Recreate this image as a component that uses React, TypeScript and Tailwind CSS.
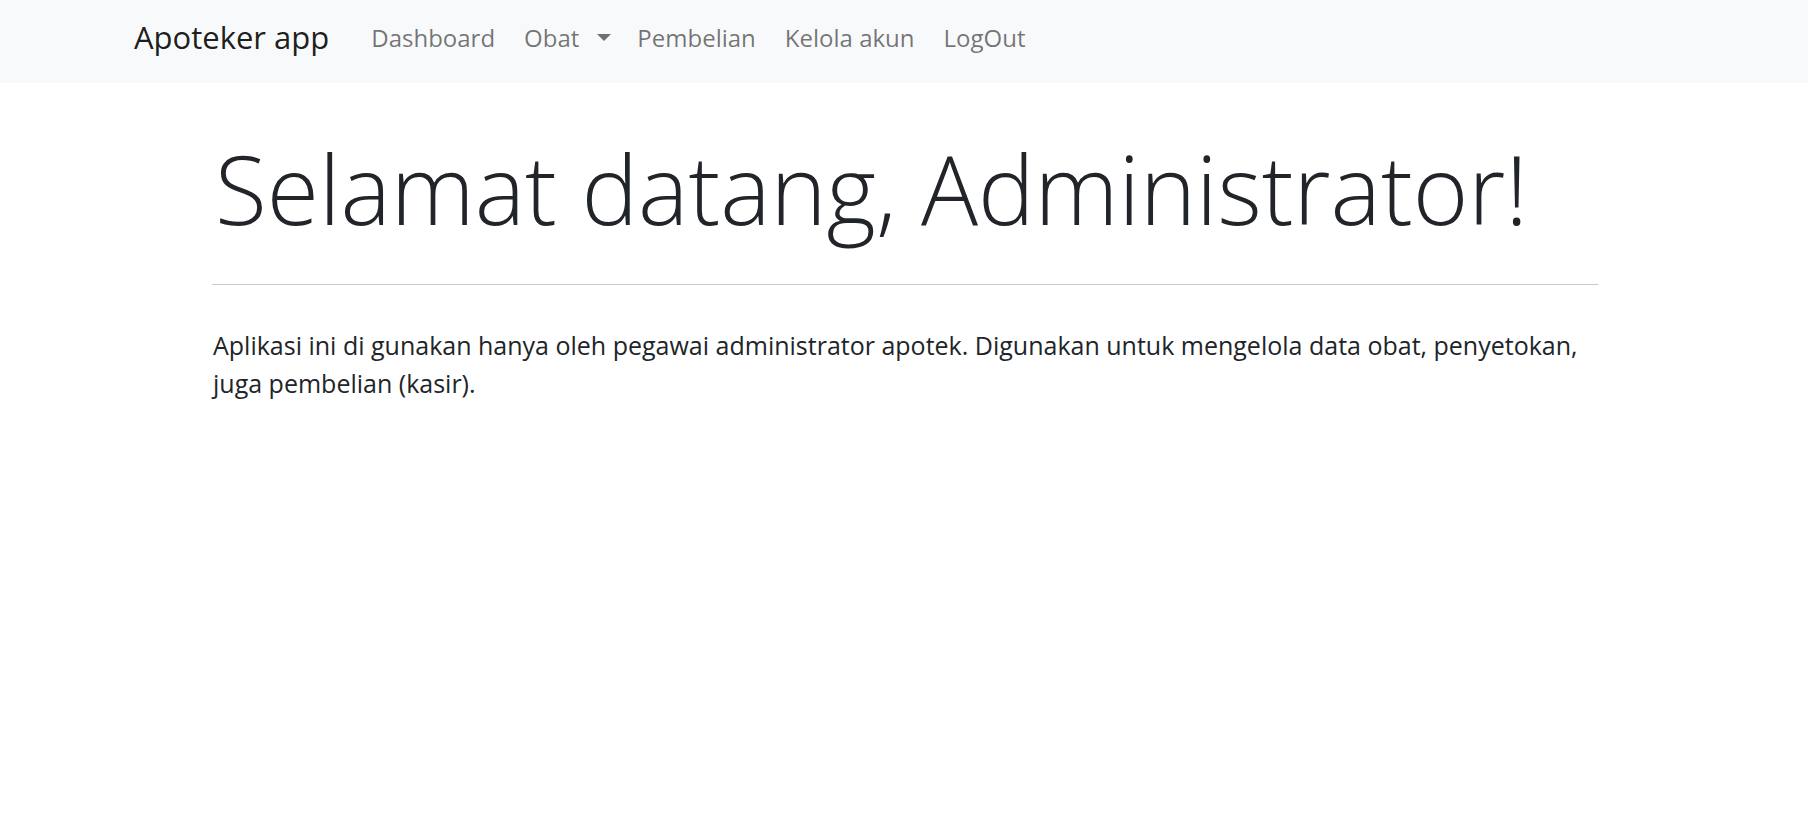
const navLinks = ['Dashboard', 'Obat', 'Pembelian', 'Kelola akun', 'LogOut'];

function Navbar() {
  return (
    <nav className="h-[83px] bg-[#f8f9fa] flex items-start pl-[134px]">
      <a href="#" className="mt-[14px] text-[31px] leading-[46px] text-[#000000e6]">
        Apoteker app
      </a>
      <ul className="ml-[42px] mt-[20px] flex items-center gap-[29px] text-[24px] leading-[36px] text-[#0000008c]">
        {navLinks.map((link) => (
          <li key={link} className="flex items-center">
            <a href="#">{link}</a>
            {link === 'Obat' && (
              <span className="ml-[18px] -mr-[3px] mb-[2px] w-0 h-0 border-t-[7px] border-x-[7px] border-t-[#0000008c] border-x-transparent" />
            )}
          </li>
        ))}
      </ul>
    </nav>
  );
}

export default function App() {
  return (
    <div className="min-h-screen bg-white font-['Open_Sans',sans-serif] text-[#212529]">
      <Navbar />
      <main className="w-[1386px] ml-[212px]">
        <h1 className="mt-[49px] pl-[3px] text-[95px] leading-[113px] font-light">
          Selamat datang, Administrator!
        </h1>
        <hr className="mt-[39px] border-0 h-px bg-[#c8c9ca]" />
        <p className="mt-[42px] pl-px text-[25px] leading-[37.5px]">
          Aplikasi ini di gunakan hanya oleh pegawai administrator apotek. Digunakan untuk mengelola data obat,
          penyetokan, juga pembelian (kasir).
        </p>
      </main>
    </div>
  );
}
